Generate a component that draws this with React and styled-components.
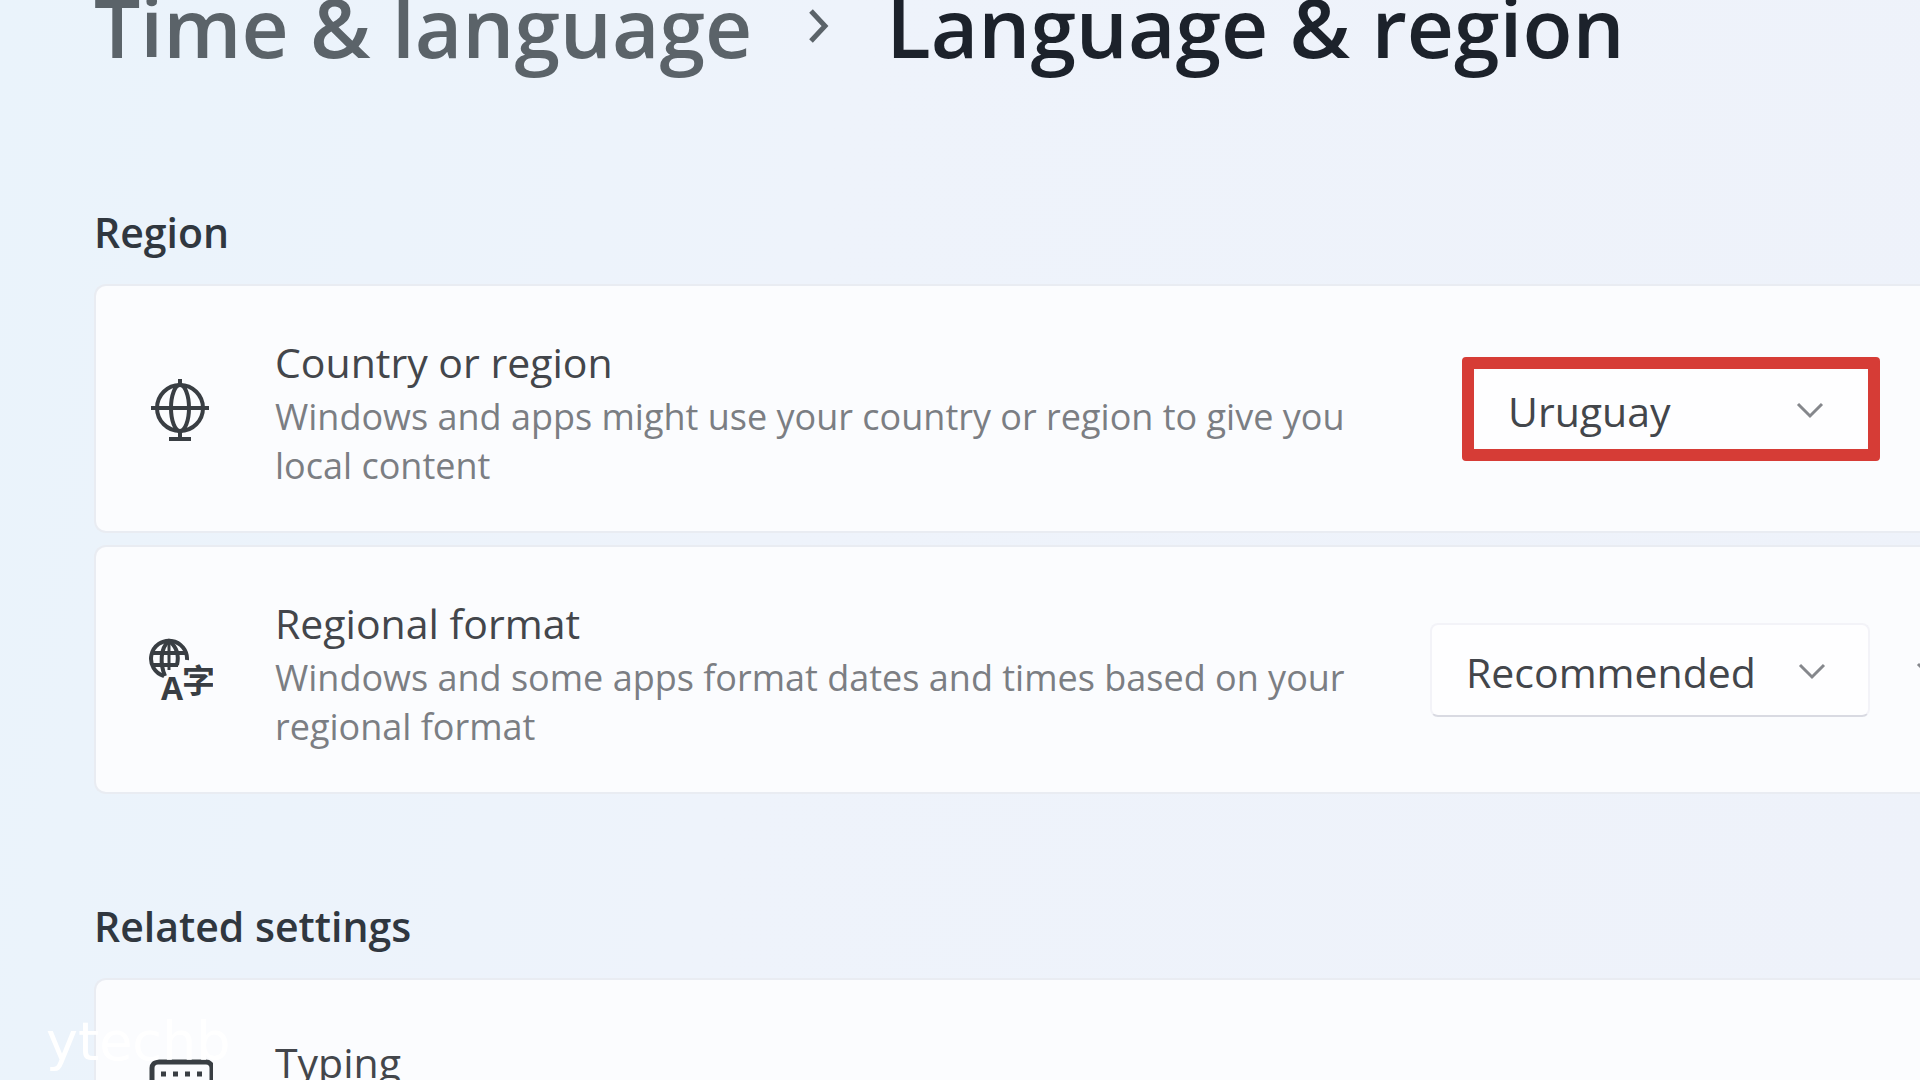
import React from "react"
import styled, { createGlobalStyle } from "styled-components"

const regions = ["Uruguay", "Argentina", "Brazil", "Chile", "Paraguay"]
const formats = ["Recommended", "English (United States)", "Español (Uruguay)"]

const ChevronDown = () => (
  <svg width="28" height="28" viewBox="0 0 28 28" fill="none" aria-hidden="true">
    <path d="M2 9L14 21L26 9" stroke="currentColor" strokeWidth="3" />
  </svg>
)

const ChevronRight = () => (
  <svg width="26" height="38" viewBox="0 0 26 38" fill="none" aria-hidden="true">
    <path d="M5 4L19 19L5 34" stroke="currentColor" strokeWidth="5" />
  </svg>
)

const GlobeIcon = () => (
  <svg width="64" height="64" viewBox="0 0 64 64" fill="none" stroke="currentColor" aria-hidden="true">
    <circle cx="31" cy="31" r="23" strokeWidth="4" />
    <ellipse cx="31" cy="31" rx="9" ry="23" strokeWidth="4" />
    <path d="M2 31H60" strokeWidth="4" />
    <path d="M31 2V8M31 54V62" strokeWidth="4" />
    <path d="M20 62H42" strokeWidth="4" />
  </svg>
)

const LanguageIcon = () => (
  <svg width="64" height="64" viewBox="0 0 64 64" fill="none" stroke="currentColor" aria-hidden="true">
    <path d="M15 38A18 18 0 1 1 38 22" strokeWidth="4" />
    <path d="M16 38C11 26 11 10 20 3C28 9 30 18 28 27" strokeWidth="4" />
    <path d="M20 4V32" strokeWidth="3" />
    <path d="M3 15H38M3 27H29" strokeWidth="4" />
    <text x="12" y="62" fontSize="32" fontWeight="700" fill="currentColor" stroke="none">A</text>
    <text x="33" y="55" fontSize="33" fontWeight="700" fill="currentColor" stroke="none">字</text>
  </svg>
)

const KeyboardIcon = () => (
  <svg width="64" height="64" viewBox="0 0 64 64" fill="none" stroke="currentColor" aria-hidden="true">
    <rect x="3" y="10" width="60" height="44" rx="6" strokeWidth="5" />
    <path d="M12 22H54" strokeWidth="5" strokeDasharray="5 7" />
    <path d="M18 32H50" strokeWidth="5" strokeDasharray="5 7" />
    <path d="M15 43H49" strokeWidth="5" />
  </svg>
)

const App = () => {
  return (
    <Page>
      <GlobalStyle />
      <Breadcrumb aria-label="Breadcrumb">
        <Parent href="#time-language">Time &amp; language</Parent>
        <ChevronRight />
        <Current>Language &amp; region</Current>
      </Breadcrumb>

      <Section $top="152px">
        <Heading>Region</Heading>
        <Card>
          <Icon><GlobeIcon /></Icon>
          <Label htmlFor="country">
            <Title>Country or region</Title>
            <Description>
              Windows and apps might use your country or region to give you local content
            </Description>
          </Label>
          <Highlight>
            <Dropdown $plain>
              <select id="country" defaultValue="Uruguay">
                {regions.map((name) => <option key={name}>{name}</option>)}
              </select>
              <Arrow><ChevronDown /></Arrow>
            </Dropdown>
          </Highlight>
        </Card>
        <Card>
          <Icon><LanguageIcon /></Icon>
          <Label htmlFor="format">
            <Title>Regional format</Title>
            <Description>
              Windows and some apps format dates and times based on your regional format
            </Description>
          </Label>
          <Dropdown>
            <select id="format" defaultValue="Recommended">
              {formats.map((name) => <option key={name}>{name}</option>)}
            </select>
            <Arrow><ChevronDown /></Arrow>
          </Dropdown>
          <Expand aria-label="Show regional format details"><ChevronDown /></Expand>
        </Card>
      </Section>

      <Section $top="104px">
        <Heading>Related settings</Heading>
        <LinkCard href="#typing">
          <Icon><KeyboardIcon /></Icon>
          <Title>Typing</Title>
        </LinkCard>
      </Section>

      <Watermark>ytechb</Watermark>
    </Page>
  )
}

export default App

const GlobalStyle = createGlobalStyle`
  * {
    box-sizing: border-box;
  }

  body {
    margin: 0;
    font-family: "Open Sans", "Noto Sans", "Noto Sans CJK SC", sans-serif;
  }
`

const Page = styled.main`
  position: relative;
  height: 100vh;
  overflow: hidden;
  padding-left: 94px;
  color: #43464b;
  background: linear-gradient(100deg, #eaf3fb 0%, #eef3fb 40%, #eef2fa 100%);
`

const Breadcrumb = styled.nav`
  display: flex;
  align-items: center;
  gap: 54px;
  font-size: 82px;
  font-weight: 600;
  line-height: 52px;
  white-space: nowrap;
  color: #5b6369;
`

const Parent = styled.a`
  color: inherit;
  text-decoration: none;
`

const Current = styled.h1`
  margin: 0;
  font: inherit;
  color: #1c222b;
`

const Section = styled.section`
  display: flex;
  flex-direction: column;
  gap: 12px;
  padding-top: ${({ $top }) => $top};
`

const Heading = styled.h2`
  margin: 0 0 12px;
  font-size: 41px;
  font-weight: 600;
  line-height: 56px;
  color: #30373f;
`

const Card = styled.div`
  display: flex;
  align-items: center;
  padding: 42px 0 41px 53px;
  border: 2px solid #e9ecf2;
  border-right: 0;
  border-radius: 12px 0 0 12px;
  background: #fbfcfe;
`

const LinkCard = styled(Card).attrs({ as: "a" })`
  padding: 52px 0 88px 53px;
  align-items: flex-start;
  color: inherit;
  text-decoration: none;

  svg {
    margin-top: 20px;
  }
`

const Icon = styled.span`
  flex: none;
  display: flex;
  width: 126px;
  color: #393e43;
`

const Label = styled.label`
  flex: 1;
  padding: 4px 60px 0 0;
`

const Title = styled.span`
  display: block;
  font-size: 41px;
  line-height: 60px;
`

const Description = styled.span`
  display: block;
  font-size: 36px;
  line-height: 49px;
  color: #7b7e83;
`

const Dropdown = styled.div`
  position: relative;
  width: ${({ $plain }) => ($plain ? "394px" : "440px")};

  select {
    display: block;
    width: 100%;
    height: ${({ $plain }) => ($plain ? "80px" : "94px")};
    padding: 4px 100px 0 34px;
    appearance: none;
    border: ${({ $plain }) => ($plain ? "0" : "2px solid #f3f3f8")};
    border-bottom-color: #d9dae2;
    border-radius: 8px;
    background: #fefeff;
    color: inherit;
    font-family: inherit;
    font-size: 41px;
  }
`

const Arrow = styled.span`
  position: absolute;
  top: 0;
  right: 44px;
  display: flex;
  align-items: center;
  height: 100%;
  color: #85878c;
  pointer-events: none;
`

const Highlight = styled.div`
  margin-right: 40px;
  border: 12px solid #d63c36;
  border-radius: 4px;
`

const Expand = styled.button`
  flex: none;
  width: 50px;
  padding: 0 0 0 46px;
  border: 0;
  background: none;
  color: #85878c;
  overflow: hidden;
`

const Watermark = styled.div`
  position: absolute;
  left: 46px;
  bottom: 8px;
  font-family: "DejaVu Sans", sans-serif;
  font-size: 54px;
  line-height: 60px;
  color: #ffffff;
`
